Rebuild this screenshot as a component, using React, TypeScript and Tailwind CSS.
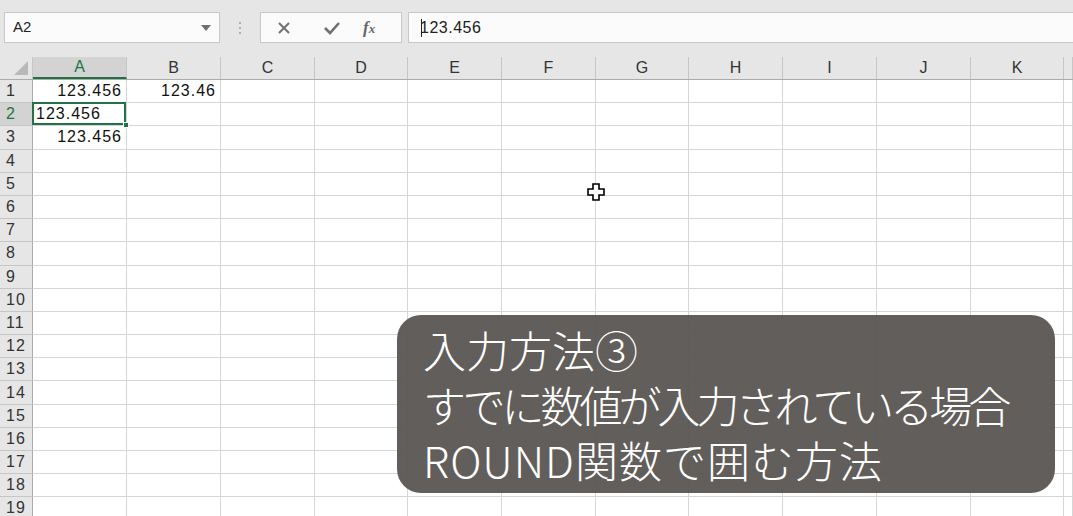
import React from "react";

const COLS = ["A", "B", "C", "D", "E", "F", "G", "H", "I", "J", "K", ""];
const ROWS = Array.from({ length: 19 }, (_, i) => i + 1);

const cellFont = { fontFamily: '"Liberation Sans", "Noto Sans CJK JP", sans-serif' };

const cells: Record<string, { text: string; align: "left" | "right" }> = {
  "A1": { text: "123.456", align: "right" },
  "B1": { text: "123.46", align: "right" },
  "A2": { text: "123.456", align: "left" },
  "A3": { text: "123.456", align: "right" },
};

const gridCols =
  "grid grid-cols-[33px_94px_94px_94px_93px_94px_94px_93px_94px_94px_94px_93px_1fr] grid-rows-[100%]";

function FormulaBar() {
  return (
    <div className="h-[57px] bg-[#e6e6e6] flex items-start pt-[12px] pl-[4px]">
      <div className="w-[216px] h-[31px] bg-[#fbfbfb] border border-[#c8c8c8] flex items-center justify-between pl-[8px] pr-[8px]">
        <span className="text-[15px] text-[#222]" style={cellFont}>A2</span>
        <svg width="10" height="6" viewBox="0 0 10 6"><path d="M0 0 L10 0 L5 6 Z" fill="#707070" /></svg>
      </div>
      <div className="w-[40px] h-[31px] flex flex-col items-center justify-center gap-[3px]">
        <span className="w-[2px] h-[2px] bg-[#b0b0b0]" />
        <span className="w-[2px] h-[2px] bg-[#b0b0b0]" />
        <span className="w-[2px] h-[2px] bg-[#b0b0b0]" />
      </div>
      <div className="w-[142px] h-[31px] bg-[#fbfbfb] border border-[#c8c8c8] flex items-center pl-[16px]">
        <svg width="14" height="14" viewBox="0 0 14 14"><path d="M2 2 L12 12 M12 2 L2 12" stroke="#707070" strokeWidth="2" /></svg>
        <svg className="ml-[32px]" width="18" height="14" viewBox="0 0 18 14"><path d="M2 7 L7 12 L16 2" stroke="#707070" strokeWidth="2.6" fill="none" /></svg>
        <span className="ml-[22px] text-[17px] italic font-bold text-[#666]" style={{ fontFamily: '"Liberation Serif", serif' }}>
          f<span className="text-[13px]">x</span>
        </span>
      </div>
      <div className="flex-1 ml-[6px] h-[31px] bg-[#fbfbfb] border border-[#c8c8c8] border-r-0 flex items-center pl-[12px]">
        <span className="w-[1px] h-[18px] bg-[#222]" />
        <span className="-ml-[2px] text-[16px] tracking-[0.5px] text-[#222]" style={cellFont}>123.456</span>
      </div>
    </div>
  );
}

function HeaderRow() {
  return (
    <div className={`${gridCols} h-[23px] bg-[#e6e6e6] border-b border-[#ababab]`}>
      <div className="relative border-r border-[#c6c6c6]">
        <svg className="absolute right-[4px] bottom-[4px]" width="14" height="14" viewBox="0 0 14 14">
          <path d="M14 0 L14 14 L0 14 Z" fill="#b9b9b9" />
        </svg>
      </div>
      {COLS.map((c, i) => (
        <div
          key={i}
          className={
            c === "A"
              ? "bg-[#d3d3d3] border-r border-[#c6c6c6] border-b-2 border-b-[#217346] flex items-center justify-center text-[16px] leading-[18px] text-[#217346]"
              : "border-r border-[#c6c6c6] flex items-center justify-center text-[16px] leading-[18px] text-[#333]"
          }
          style={cellFont}
        >
          {c}
        </div>
      ))}
    </div>
  );
}

function Row({ n }: { n: number }) {
  return (
    <div className={`${gridCols} h-[23.2px]`}>
      <div
        className={
          n === 2
            ? "bg-[#d3d3d3] border-r border-[#ababab] border-b border-b-[#c6c6c6] flex items-center pl-[6px] text-[16px] leading-[18px] text-[#217346] tracking-[1px]"
            : "bg-[#e6e6e6] border-r border-[#ababab] border-b border-b-[#c6c6c6] flex items-center pl-[6px] text-[16px] leading-[18px] text-[#333] tracking-[1px]"
        }
        style={cellFont}
      >
        {n}
      </div>
      {COLS.map((c, i) => {
        const cell = cells[`${c}${n}`];
        const selected = c === "A" && n === 2;
        return (
          <div
            key={i}
            className={
              cell && cell.align === "right"
                ? "relative bg-white border-r border-b border-[#d6d6d6] flex items-center justify-end pr-[4px] text-[16px] leading-[18px] tracking-[1px] text-[#111]"
                : selected
                ? "relative z-10 bg-white border-r border-b border-[#d6d6d6] flex items-center pl-[3px] text-[16px] leading-[18px] tracking-[1px] text-[#111]"
                : "relative bg-white border-r border-b border-[#d6d6d6] flex items-center pl-[3px] text-[16px] leading-[18px] tracking-[1px] text-[#111]"
            }
            style={cellFont}
          >
            {cell ? cell.text : null}
            {selected && (
              <>
                <div className="absolute -left-[1px] -top-[1px] right-0 bottom-0 border-2 border-[#217346]" />
                <div className="absolute -right-[3px] -bottom-[3px] w-[6px] h-[6px] bg-[#217346] border border-white" />
              </>
            )}
          </div>
        );
      })}
    </div>
  );
}

export default function App() {
  return (
    <div className="relative w-[1073px] h-[516px] overflow-hidden bg-white">
      <FormulaBar />
      <HeaderRow />
      {ROWS.map((n) => (
        <Row key={n} n={n} />
      ))}

      {/* move cursor */}
      <svg className="absolute left-[587px] top-[183px]" width="18" height="18" viewBox="0 0 18 18">
        <path
          d="M6 1 H12 V6 H17 V12 H12 V17 H6 V12 H1 V6 H6 Z"
          fill="#fff"
          stroke="#000"
          strokeWidth="1.6"
        />
      </svg>

      {/* caption */}
      <div
        className="absolute left-[397px] top-[315px] w-[658px] h-[178px] rounded-[24px] bg-[#585451]/[0.94] pl-[26px] pt-[9px] text-white text-[43px] leading-[55px] font-light whitespace-nowrap"
        style={{ fontFamily: '"Noto Sans CJK JP", "Noto Sans", sans-serif' }}
      >
        <div className="h-[55px] leading-[50px]">入力方法③</div>
        <div className="h-[55px] leading-[50px] tracking-[-4px]">すでに数値が入力されている場合</div>
        <div className="h-[55px] leading-[50px] tracking-[1px]">ROUND関数で囲む方法</div>
      </div>
    </div>
  );
}
